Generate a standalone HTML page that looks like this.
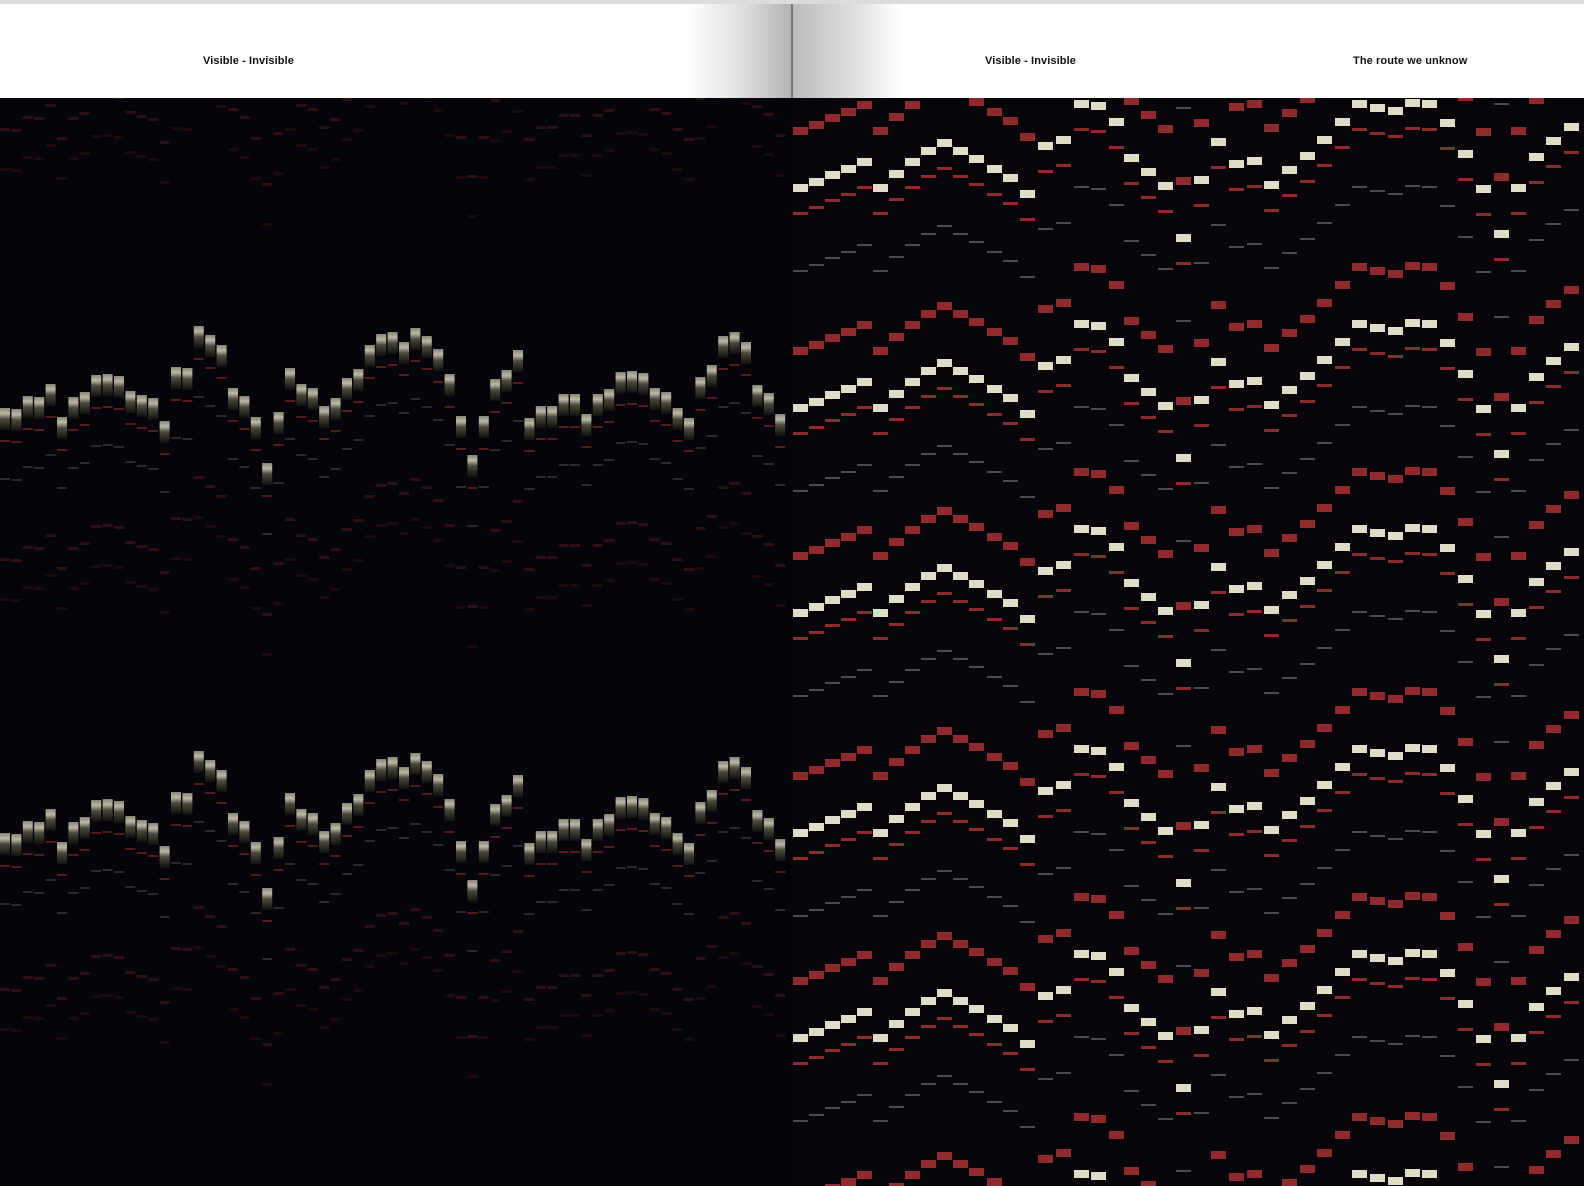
<!DOCTYPE html>
<html><head><meta charset="utf-8">
<style>
html,body{margin:0;padding:0;width:1584px;height:1186px;overflow:hidden;background:#fff;font-family:"Liberation Sans",sans-serif}
#top{position:absolute;left:0;top:0;width:1584px;height:4px;background:#dcdce0}
#hdr{position:absolute;left:0;top:4px;width:1584px;height:94px;background:#fff}
.t{position:absolute;top:55px;font-size:11px;font-weight:bold;color:#111;letter-spacing:0.1px;white-space:nowrap;line-height:12px}
#sl{position:absolute;left:686px;top:4px;width:105px;height:94px;background:linear-gradient(90deg,#fff,#e2e2e2 50%,#b4b4b4)}
#sp{position:absolute;left:791px;top:4px;width:2px;height:94px;background:#777}
#sr{position:absolute;left:793px;top:4px;width:107px;height:94px;background:linear-gradient(90deg,#bcbcbc,#dadada 50%,#fff)}
#w{position:absolute;left:0;top:98px;width:1584px;height:1088px;overflow:hidden}
svg{position:absolute;left:0;top:0;display:block}
</style></head><body>
<div id="top"></div><div id="hdr"></div>
<div id="sl"></div><div id="sr"></div><div id="sp"></div>
<div class="t" style="left:203px">Visible - Invisible</div>
<div class="t" style="left:985px">Visible - Invisible</div>
<div class="t" style="left:1353px">The route we unknow</div>
<div id="w">
<svg id="s" width="1584" height="1088" viewBox="0 98 1584 1088" xmlns="http://www.w3.org/2000/svg">
<defs>
<linearGradient id="wg" x1="0" y1="0" x2="0" y2="1">
<stop offset="0" stop-color="#a9a68c"/><stop offset="0.25" stop-color="#e8e6d0"/><stop offset="0.5" stop-color="#5d5a46"/><stop offset="1" stop-color="#121210"/>
</linearGradient>
</defs>
<rect x="0" y="98" width="792" height="1088" fill="#03050a"/>
<rect x="792" y="98" width="792" height="1088" fill="#07050a"/>
<g id="L"></g><g id="R"></g>
</svg>
</div>
<script>
var NS="http://www.w3.org/2000/svg";
function r(g,x,y,w,h,f,o){var e=document.createElementNS(NS,"rect");e.setAttribute("x",x);e.setAttribute("y",y);e.setAttribute("width",w);e.setAttribute("height",h);e.setAttribute("fill",f);if(o!=null)e.setAttribute("opacity",o);g.appendChild(e);}
var R=document.getElementById("R"),L=document.getElementById("L");
var cols=[[793,184],[809,178],[825,171],[841,165],[857,158],[873,184],[889,170],[905,158],[921,147],[937,139],[953,147],[969,155],[987,165],[1003,174],[1020,190],[1038,142],[1056,136],[1074,100],[1091,102],[1109,118],[1124,154],[1141,168],[1158,182],[1176,234],[1194,176],[1211,138],[1229,160],[1247,157],[1264,181],[1282,166],[1300,152],[1317,136],[1335,118],[1352,100],[1370,104],[1388,107],[1405,99],[1422,100],[1440,119],[1458,150],[1476,185],[1494,230],[1511,184],[1529,153],[1546,137],[1564,123]];
var offs=[-426,-213,0,220,425,645,850,1070];
cols.forEach(function(c){
 offs.forEach(function(o){
  var v=c[1]+o;
  r(R,c[0],v-57,15,8,"#8e2a2c");
  r(R,c[0],v,15,8,"#deddc8");
  r(R,c[0],v+28,15,3,"#8c2a2c");
  r(R,c[0],v+86,15,2,"#4a4a4c");
 });
});
var i=0;
for(var x=0;x<784;x+=11.4,i++){
 var k=i%cols.length;
 var v=cols[k][1]+((i*7)%13)-6;
 [230,655].forEach(function(b){
  var y=v+b;
  r(L,x,y,10,22,"url(#wg)",0.8);
  r(L,x,y+32,10,2,"#7e2224",0.7);
  r(L,x,y+70,10,2,"#3a3a36",0.7);
 });
 [10,440,870].forEach(function(o){
  var y=v+o-60;
  r(L,x,y,10,3,"#5a1a1c",0.5);
  r(L,x,y+40,10,3,"#4a1618",0.35);
 });
}
</script>
</body></html>
